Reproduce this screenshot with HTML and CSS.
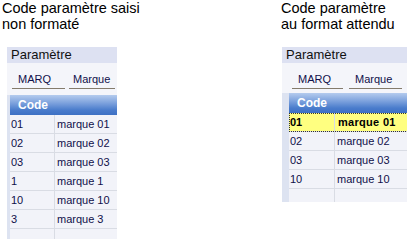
FILE: index.html
```html
<!DOCTYPE html>
<html lang="fr">
<head>
<meta charset="utf-8">
<link rel="stylesheet" href="styles.css">
</head>
<body>
<div class="page">
  <section class="col col-left">
    <h2 class="title">Code paramètre saisi<br>non formaté</h2>
    <div class="panel panel-left">
      <div class="band">Paramètre</div>
      <div class="fields">
        <div class="field f-code">MARQ</div>
        <div class="field f-name">Marque</div>
      </div>
      <div class="grid grid-left">
        <div class="gutter"></div>
        <div class="table">
          <div class="head">Code</div>
          <div class="row"><span class="c1">01</span><span class="c2">marque 01</span></div>
          <div class="row"><span class="c1">02</span><span class="c2">marque 02</span></div>
          <div class="row"><span class="c1">03</span><span class="c2">marque 03</span></div>
          <div class="row"><span class="c1">1</span><span class="c2">marque 1</span></div>
          <div class="row"><span class="c1">10</span><span class="c2">marque 10</span></div>
          <div class="row"><span class="c1">3</span><span class="c2">marque 3</span></div>
          <div class="row"><span class="c1"></span><span class="c2"></span></div>
        </div>
      </div>
    </div>
  </section>
  <section class="col col-right">
    <h2 class="title">Code paramètre<br>au format attendu</h2>
    <div class="panel panel-right">
      <div class="band">Paramètre</div>
      <div class="fields">
        <div class="field f-code">MARQ</div>
        <div class="field f-name">Marque</div>
      </div>
      <div class="grid grid-right">
        <div class="gutter"></div>
        <div class="table">
          <div class="head">Code</div>
          <div class="row sel"><span class="c1">01</span><span class="c2">marque 01</span></div>
          <div class="row"><span class="c1">02</span><span class="c2">marque 02</span></div>
          <div class="row"><span class="c1">03</span><span class="c2">marque 03</span></div>
          <div class="row"><span class="c1">10</span><span class="c2">marque 10</span></div>
          <div class="row"><span class="c1"></span><span class="c2"></span></div>
        </div>
      </div>
    </div>
  </section>
</div>
</body>
</html>
```
FILE: styles.css
```css
html, body {
  margin: 0;
  padding: 0;
  background: #ffffff;
  overflow: hidden;
}
body {
  width: 407px;
  height: 241px;
  font-family: "Liberation Sans", Arial, sans-serif;
}
.page {
  display: flex;
  width: 407px;
  height: 241px;
  overflow: hidden;
}
.col {
  flex: none;
  display: flex;
  flex-direction: column;
}
.col-left {
  width: 279px;
  padding-left: 2px;
}
.col-right {
  width: 126px;
  padding-left: 0;
}
.title {
  margin: 0;
  font-weight: normal;
  font-size: 14.5px;
  line-height: 16px;
  color: #000;
  height: 32px;
  padding-top: 0;
  white-space: nowrap;
}
.panel {
  margin-top: 15px;
  background: #f4f5fa;
  overflow: hidden;
}
.panel-left {
  margin-left: 5px;
  width: 110px;
}
.panel-right {
  margin-left: 1px;
  width: 140px;
}
.band {
  height: 16px;
  line-height: 16px;
  background: #dde1f2;
  font-size: 13px;
  padding-left: 4px;
  color: #111;
}
.fields {
  display: flex;
  height: 32px;
  align-items: flex-end;
}
.field {
  font-size: 11px;
  color: #10104a;
  height: 18px;
  line-height: 16px;
  border-bottom: 1px solid #847b6c;
  box-sizing: border-box;
  margin-bottom: 6px;
}
.panel-left .f-code { margin-left: 5px; width: 53px; padding-left: 6px; }
.panel-left .f-name { margin-left: 4px; width: 46px; padding-left: 4px; }
.panel-right .f-code { margin-left: 10px; width: 51px; padding-left: 6px; }
.panel-right .f-name { margin-left: 6px; width: 53px; padding-left: 6px; }
.grid {
  display: flex;
  overflow: hidden;
}
.grid-left { height: 144px; }
.grid-right { height: 109px; margin-top: -2px; }
.gutter {
  flex: none;
  background: #dde3f1;
}
.grid-left .gutter { width: 3px; }
.grid-right .gutter { width: 7px; }
.table {
  flex: 1;
  background: #f2f3f9;
}
.head {
  height: 20px;
  line-height: 20px;
  background: linear-gradient(#b4cbee 0%, #7da2dd 40%, #4a7ccc 75%, #3d70c4 100%);
  color: #fff;
  font-weight: bold;
  font-size: 12px;
  padding-left: 8px;
}
.row {
  display: flex;
  height: 19px;
  line-height: 18px;
  border-bottom: 1px solid #d9dce4;
  box-sizing: border-box;
  font-size: 11px;
  color: #10104a;
}
.c1 {
  flex: none;
  border-right: 1px solid #d9dce4;
  padding-left: 1px;
  box-sizing: border-box;
}
.grid-left .c1 { width: 45px; }
.grid-right .c1 { width: 46px; }
.c2 {
  padding-left: 2px;
}
.row.sel {
  background: #ffff80;
  font-weight: bold;
  color: #000;
  outline: 1px dotted #333;
  outline-offset: -1px;
}
.row.sel .c2 {
  padding-left: 3px;
  letter-spacing: 0.3px;
}
```
